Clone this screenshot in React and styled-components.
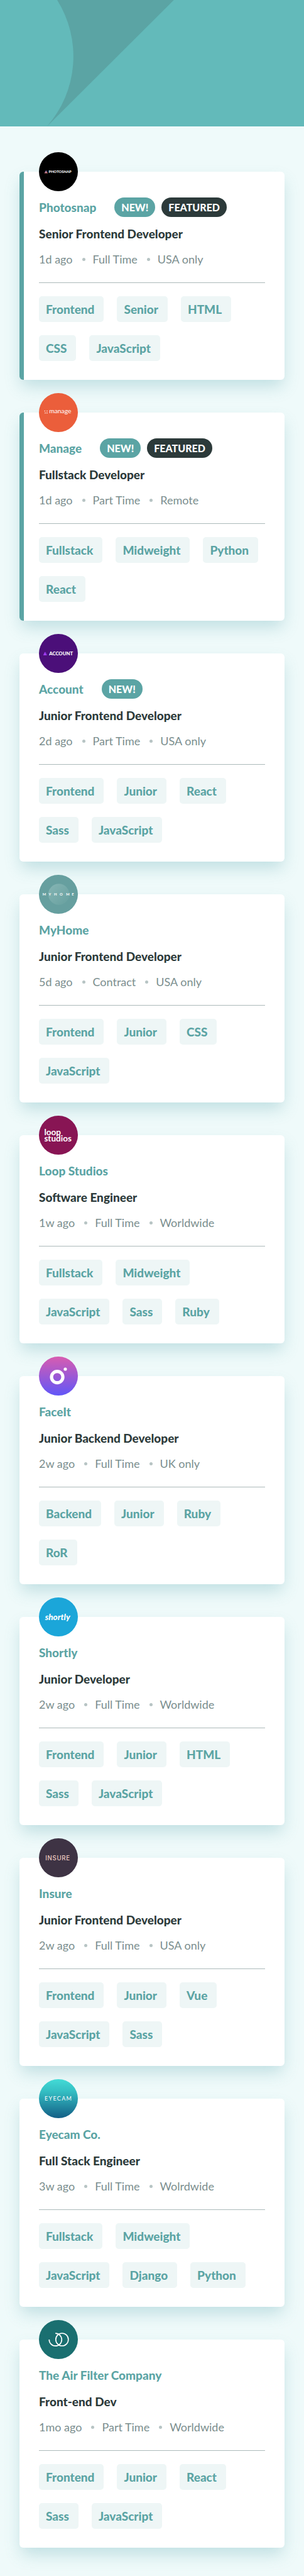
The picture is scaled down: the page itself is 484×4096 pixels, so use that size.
import React from "react";
import styled, { createGlobalStyle, css } from "styled-components";

const GlobalStyle = createGlobalStyle`
  *, *::before, *::after { box-sizing: border-box; }
  body {
    margin: 0;
    background: #effafa;
    font-family: Lato, "Open Sans", sans-serif;
    color: #2c3a3a;
  }
`;

const Header = styled.header`
  height: 201px;
  overflow: hidden;
  background: #63baba;
`;

const HeaderArt = styled.svg`
  display: block;
  width: 484px;
  height: 201px;
`;

const JobList = styled.main`
  display: flex;
  flex-direction: column;
  gap: 52px;
  padding: 72px 31px 45px;
`;

const Card = styled.article`
  display: flex;
  flex-direction: column;
  align-items: stretch;
  padding: 0 31px 30px;
  border-radius: 6px;
  background: #ffffff;
  box-shadow: 0 13px 26px -3px rgba(80, 160, 168, 0.3);
  ${(p) =>
    p.$featured &&
    css`
      border-left: 7px solid #5ba4a4;
      padding-left: 24px;
    `}
`;

const Logo = styled.svg`
  display: block;
  width: 62px;
  height: 62px;
  margin-top: -31px;
  font-family: Lato, sans-serif;
`;

const CompanyRow = styled.div`
  display: flex;
  align-items: center;
  gap: 10px;
  height: 31px;
  margin-top: 10px;
`;

const Company = styled.h2`
  margin: 0 19px 0 0;
  font-size: 19px;
  line-height: 24px;
  font-weight: 900;
  color: #5ba4a4;
`;

const Badge = styled.span`
  padding: 0 11px;
  border-radius: 16px;
  font-size: 16px;
  line-height: 31px;
  font-weight: 900;
  color: #ffffff;
  background: ${(p) => (p.$dark ? "#2c3a3a" : "#5ba4a4")};
`;

const Position = styled.h3`
  margin: 15px 0 0;
  font-size: 19px;
  line-height: 24px;
  font-weight: 900;
`;

const Meta = styled.ul`
  display: flex;
  align-items: center;
  margin: 16px 0 0;
  padding: 0;
  list-style: none;
  font-size: 18px;
  line-height: 24px;
  color: #7b8e8e;
`;

const MetaItem = styled.li`
  display: flex;
  align-items: center;

  & + &::before {
    content: "";
    width: 5px;
    height: 5px;
    margin: 0 12px 0 15px;
    border-radius: 50%;
    background: #b7c4c4;
  }
`;

const Divider = styled.hr`
  width: 100%;
  height: 1px;
  margin: 25px 0 21px;
  border: 0;
  background: #acbaba;
`;

const Tags = styled.div`
  display: flex;
  flex-wrap: wrap;
  gap: 21px;
`;

const Tag = styled.button`
  height: 41px;
  padding: 0 15px 0 11px;
  border: 0;
  border-radius: 5px;
  background: #eef6f6;
  color: #5ba4a4;
  font-family: inherit;
  font-size: 19px;
  font-weight: 900;
  cursor: pointer;
`;

const logos = {
  photosnap: (
    <>
      <defs>
        <linearGradient id="photosnap" x1="0" y1="0" x2="0.4" y2="1">
          <stop offset="0" stopColor="#5a7be0" />
          <stop offset="1" stopColor="#e08078" />
        </linearGradient>
      </defs>
      <circle cx="48" cy="48" r="48" fill="#000" />
      <path d="M17.500 44.500L21.800 52H13.200Z" fill="url(#photosnap)" />
      <text x="24" y="51" fontSize="9" fontWeight="900" fill="#fff">PHOTOSNAP</text>
    </>
  ),
  manage: (
    <>
      <circle cx="48" cy="48" r="48" fill="#eb5e3b" />
      <g fill="#fff">
        <circle cx="14.500" cy="44" r="1.200" />
        <circle cx="20" cy="44" r="1.200" />
        <circle cx="15.500" cy="49" r="1.200" />
        <circle cx="20" cy="49" r="1.200" />
      </g>
      <text x="25" y="50" fontSize="16" fill="#fff">manage</text>
    </>
  ),
  account: (
    <>
      <circle cx="48" cy="48" r="48" fill="#4b0f79" />
      <path d="M14 44.500L17 44.500L20.500 52.500H17Z" fill="#6a26b8" />
      <path d="M14.500 44L19 52.500H10.500Z" fill="#a13cf0" />
      <text x="25" y="52" fontSize="12" fontWeight="900" fill="#fff">ACCOUNT</text>
    </>
  ),
  myhome: (
    <>
      <defs>
        <linearGradient id="myhome" x1="0" y1="0" x2="1" y2="1">
          <stop offset="0" stopColor="#86b5b4" />
          <stop offset="1" stopColor="#67a09f" />
        </linearGradient>
      </defs>
      <circle cx="48" cy="48" r="48" fill="#669f9f" />
      <circle cx="49" cy="48" r="26" fill="url(#myhome)" />
      <text x="9 24 37 51 67 81" y="51" fontSize="9" fontWeight="700" fill="#fff">MYHOME</text>
    </>
  ),
  loop: (
    <>
      <circle cx="48" cy="48" r="48" fill="#881554" />
      <g fontSize="21" fontWeight="700" fill="#fff">
        <text x="13" y="48">loop</text>
        <text x="13" y="63">studios</text>
      </g>
    </>
  ),
  faceit: (
    <>
      <defs>
        <linearGradient id="faceit" x1="0" y1="0" x2="0" y2="1">
          <stop offset="0" stopColor="#d85cb0" />
          <stop offset="1" stopColor="#6156f8" />
        </linearGradient>
      </defs>
      <circle cx="48" cy="48" r="48" fill="url(#faceit)" />
      <circle cx="45" cy="50.500" r="14" fill="none" stroke="#fff" strokeWidth="8" />
      <circle cx="65" cy="31" r="4" fill="#fff" />
    </>
  ),
  shortly: (
    <>
      <circle cx="48" cy="48" r="48" fill="#1ba6d9" />
      <text x="15" y="55" fontSize="21" fontWeight="900" fontStyle="italic" fill="#fff">shortly</text>
    </>
  ),
  insure: (
    <>
      <circle cx="48" cy="48" r="48" fill="#3e3344" />
      <text x="16" y="54" fontSize="15" fontFamily="Inter, sans-serif" letterSpacing="1" fontWeight="500" fill="#ecc9c0">INSURE</text>
    </>
  ),
  eyecam: (
    <>
      <defs>
        <linearGradient id="eyecam" x1="0" y1="0" x2="0" y2="1">
          <stop offset="0" stopColor="#43dbd6" />
          <stop offset="0.3" stopColor="#35c0c4" />
          <stop offset="1" stopColor="#135f86" />
        </linearGradient>
      </defs>
      <circle cx="48" cy="48" r="48" fill="url(#eyecam)" />
      <text x="14" y="53" fontSize="14" letterSpacing="2" fill="#fff">EYECAM</text>
    </>
  ),
  airfilter: (
    <>
      <circle cx="48" cy="48" r="48" fill="#1a6f70" />
      <g fill="none" stroke="#fff" strokeWidth="2.600">
        <circle cx="57" cy="48" r="15.500" />
        <path d="M25.200 48A15.500 15.500 0 1 0 40.500 32.800" />
      </g>
    </>
  ),
};

const jobs = [
  { logo: "photosnap", company: "Photosnap", isNew: true, featured: true, position: "Senior Frontend Developer", meta: ["1d ago", "Full Time", "USA only"], tags: ["Frontend", "Senior", "HTML", "CSS", "JavaScript"] },
  { logo: "manage", company: "Manage", isNew: true, featured: true, position: "Fullstack Developer", meta: ["1d ago", "Part Time", "Remote"], tags: ["Fullstack", "Midweight", "Python", "React"] },
  { logo: "account", company: "Account", isNew: true, position: "Junior Frontend Developer", meta: ["2d ago", "Part Time", "USA only"], tags: ["Frontend", "Junior", "React", "Sass", "JavaScript"] },
  { logo: "myhome", company: "MyHome", position: "Junior Frontend Developer", meta: ["5d ago", "Contract", "USA only"], tags: ["Frontend", "Junior", "CSS", "JavaScript"] },
  { logo: "loop", company: "Loop Studios", position: "Software Engineer", meta: ["1w ago", "Full Time", "Worldwide"], tags: ["Fullstack", "Midweight", "JavaScript", "Sass", "Ruby"] },
  { logo: "faceit", company: "FaceIt", position: "Junior Backend Developer", meta: ["2w ago", "Full Time", "UK only"], tags: ["Backend", "Junior", "Ruby", "RoR"] },
  { logo: "shortly", company: "Shortly", position: "Junior Developer", meta: ["2w ago", "Full Time", "Worldwide"], tags: ["Frontend", "Junior", "HTML", "Sass", "JavaScript"] },
  { logo: "insure", company: "Insure", position: "Junior Frontend Developer", meta: ["2w ago", "Full Time", "USA only"], tags: ["Frontend", "Junior", "Vue", "JavaScript", "Sass"] },
  { logo: "eyecam", company: "Eyecam Co.", position: "Full Stack Engineer", meta: ["3w ago", "Full Time", "Wolrdwide"], tags: ["Fullstack", "Midweight", "JavaScript", "Django", "Python"] },
  { logo: "airfilter", company: "The Air Filter Company", position: "Front-end Dev", meta: ["1mo ago", "Part Time", "Worldwide"], tags: ["Frontend", "Junior", "React", "Sass", "JavaScript"] },
];

function JobCard({ job }) {
  return (
    <Card $featured={job.featured}>
      <Logo viewBox="0 0 96 96" role="img" aria-label={job.company}>
        {logos[job.logo]}
      </Logo>
      <CompanyRow>
        <Company>{job.company}</Company>
        {job.isNew && <Badge>NEW!</Badge>}
        {job.featured && <Badge $dark>FEATURED</Badge>}
      </CompanyRow>
      <Position>{job.position}</Position>
      <Meta>
        {job.meta.map((item) => (
          <MetaItem key={item}>{item}</MetaItem>
        ))}
      </Meta>
      <Divider />
      <Tags>
        {job.tags.map((tag) => (
          <Tag key={tag} type="button">{tag}</Tag>
        ))}
      </Tags>
    </Card>
  );
}

export default function App() {
  return (
    <>
      <GlobalStyle />
      <Header>
        <HeaderArt viewBox="0 0 750 312" preserveAspectRatio="none" aria-hidden="true">
          <path d="M141 0A262 262 0 0 1 116 312L429 0Z" fill="#5ba4a4" />
        </HeaderArt>
      </Header>
      <JobList>
        {jobs.map((job) => (
          <JobCard key={job.company} job={job} />
        ))}
      </JobList>
    </>
  );
}
